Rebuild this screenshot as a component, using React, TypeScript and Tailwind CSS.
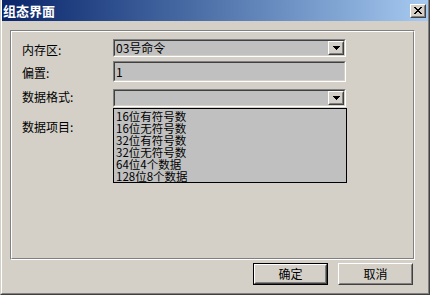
import React from "react";

const ITEMS = [
  "16位有符号数",
  "16位无符号数",
  "32位有符号数",
  "32位无符号数",
  "64位4个数据",
  "128位8个数据",
];

function CloseX() {
  // classic 8x7 pixel X
  const rows = ["XX....XX", ".XX..XX.", "..XXXX..", "...XX...", "..XXXX..", ".XX..XX.", "XX....XX"];
  return (
    <svg width="8" height="7" viewBox="0 0 8 7" shapeRendering="crispEdges">
      {rows.map((r, y) =>
        r.split("").map((c, x) => (c === "X" ? <rect key={`${x}-${y}`} x={x} y={y} width="1" height="1" fill="#000" /> : null))
      )}
    </svg>
  );
}

function Raised({ className = "", children }: { className?: string; children?: React.ReactNode }) {
  return (
    <div className={`border border-t-white border-l-white border-r-[#404040] border-b-[#404040] bg-[#d4d0c8] ${className}`}>
      <div className="w-full h-full border border-t-[#d4d0c8] border-l-[#d4d0c8] border-r-[#808080] border-b-[#808080] flex items-center justify-center">
        {children}
      </div>
    </div>
  );
}

function Sunken({ className = "", children }: { className?: string; children?: React.ReactNode }) {
  return (
    <div className={`border border-t-[#808080] border-l-[#808080] border-r-white border-b-white ${className}`}>
      <div className="w-full h-full border border-t-[#404040] border-l-[#404040] border-r-[#d4d0c8] border-b-[#d4d0c8] bg-[#c0c0c0] flex items-stretch">
        {children}
      </div>
    </div>
  );
}

function Combo({ value }: { value?: string }) {
  return (
    <Sunken className="w-[233px] h-[18px]">
      <div className="flex-1 pl-[1px] leading-[14px] text-[12px] text-black">{value}</div>
      <Raised className="w-[16px] h-full">
        <svg width="7" height="4" viewBox="0 0 7 4" shapeRendering="crispEdges">
          <path d="M0 0h7v1h-1v1h-1v1h-1v1h-1v-1h-1v-1h-1v-1h-1z" fill="#000" />
        </svg>
      </Raised>
    </Sunken>
  );
}

export default function App() {
  return (
    <div className="w-[430px] h-[295px] font-['Noto_Sans_CJK_SC',sans-serif] text-black">
      <div className="w-full h-full border-l border-r border-b border-l-[#d4d0c8] border-r-[#404040] border-b-[#404040] bg-[#d4d0c8]">
        <div className="w-full h-full border-l border-r border-b border-l-white border-r-[#808080] border-b-[#808080] flex flex-col">
          {/* Title bar */}
          <div className="h-[21px] flex items-center justify-between pl-[1px] pr-[2px] bg-gradient-to-r from-[#0a246a] to-[#a6caf0]">
            <span className="text-white font-bold text-[13px] leading-[13px]">组态界面</span>
            <Raised className="w-[16px] h-[14px]">
              <CloseX />
            </Raised>
          </div>

          {/* Panel */}
          <div className="ml-[8px] mt-[9px] w-[405px] h-[230px] border border-t-[#808080] border-l-[#808080] border-r-white border-b-white">
            <div className="w-full h-full border border-t-white border-l-white border-r-[#808080] border-b-[#808080] pl-[10px] text-[12px] leading-[12px]">
              <div className="flex mt-[7px]">
                <div className="w-[91px] pt-[5px]">内存区:</div>
                <Combo value="03号命令" />
              </div>
              <div className="flex mt-[4px]">
                <div className="w-[91px] pt-[6px]">偏置:</div>
                <Sunken className="w-[233px] h-[21px]">
                  <div className="pl-[1px] pt-[2px] leading-[14px]">1</div>
                </Sunken>
              </div>
              <div className="flex mt-[7px]">
                <div className="w-[91px] pt-[2px]">数据格式:</div>
                <Combo />
              </div>
              <div className="flex mt-[1px]">
                <div className="w-[91px] pt-[13px]">数据项目:</div>
                <div className="w-[234px] h-[75px] border border-black bg-[#c0c0c0] pl-[2px] pt-[1px] text-[11.5px]">
                  {ITEMS.map((t) => (
                    <div key={t} className="h-[12px] leading-[12px] whitespace-nowrap">
                      {t}
                    </div>
                  ))}
                </div>
              </div>
            </div>
          </div>

          {/* Buttons */}
          <div className="flex justify-end gap-[10px] pr-[15px] mt-[3px]">
            <div className="border border-black">
              <Raised className="w-[73px] h-[20px]">
                <span className="text-[12px] leading-[12px]">确定</span>
              </Raised>
            </div>
            <Raised className="w-[75px] h-[22px]">
              <span className="text-[12px] leading-[12px]">取消</span>
            </Raised>
          </div>
        </div>
      </div>
    </div>
  );
}
